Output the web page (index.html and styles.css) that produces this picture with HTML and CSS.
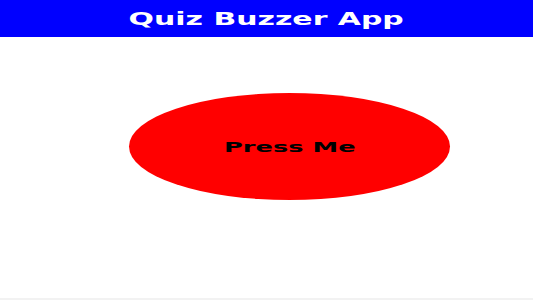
FILE: index.html
```html
<!DOCTYPE html>
<html lang="en">
<head>
<meta charset="utf-8">
<title>Quiz Buzzer App</title>
<link rel="stylesheet" href="styles.css">
</head>
<body>
<div class="app">
  <header class="topbar">
    <h1 class="title">Quiz Buzzer App</h1>
  </header>
  <main class="stage">
    <button class="buzzer" type="button"><span class="buzzer-label">Press Me</span></button>
  </main>
  <div class="baseline"></div>
</div>
</body>
</html>
```

FILE: styles.css
```css
html, body {
  margin: 0;
  padding: 0;
  background: #ffffff;
}
.app {
  display: flex;
  flex-direction: column;
  height: 100vh;
  font-family: "DejaVu Sans", "Liberation Sans", sans-serif;
}
.topbar {
  height: 37px;
  background: #0000ff;
  display: flex;
  align-items: center;
  justify-content: center;
  flex: none;
}
.title {
  margin: 0;
  color: #ffffff;
  font-size: 17px;
  font-weight: bold;
  line-height: 1;
  transform: scaleX(1.76);
  padding-top: 1px;
}
.stage {
  flex: 1;
  display: flex;
  align-items: flex-start;
  padding: 56px 0 0 129px;
}
.buzzer {
  width: 321px;
  height: 107px;
  border: none;
  border-radius: 50%;
  background: #ff0000;
  display: flex;
  align-items: center;
  justify-content: center;
  padding: 0;
  cursor: pointer;
}
.buzzer-label {
  display: block;
  font-family: "DejaVu Sans", "Liberation Sans", sans-serif;
  font-weight: bold;
  font-size: 14px;
  color: #000000;
  transform: scaleX(1.84);
}
.baseline {
  height: 2px;
  background: #f2f2f2;
  flex: none;
}
```
